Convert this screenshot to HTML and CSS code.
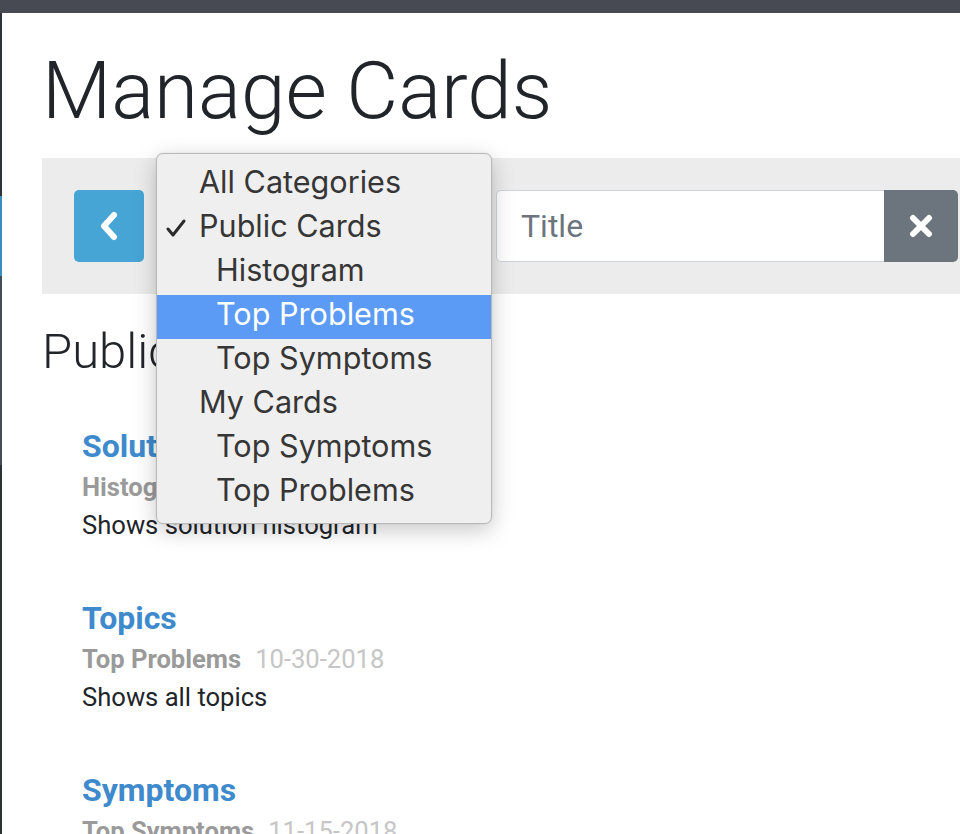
FILE: index.html
```html
<!DOCTYPE html>
<html lang="en">
<head>
<meta charset="utf-8">
<title>Manage Cards</title>
<link rel="stylesheet" href="styles.css">
</head>
<body>
<div class="topbar"></div>
<div class="shell">
  <aside class="rail">
    <span class="seg seg-dark"></span>
    <span class="seg seg-blue"></span>
    <span class="seg seg-slate"></span>
    <span class="seg seg-rest"></span>
  </aside>
  <main class="main">
    <h1 class="page-title">Manage Cards</h1>
    <div class="filters">
      <button class="back" type="button" aria-label="Back">
        <svg width="22" height="30" viewBox="0 0 22 30"><polyline points="16,4 6,15 16,26" fill="none" stroke="#fff" stroke-width="6" stroke-linecap="round" stroke-linejoin="round"/></svg>
      </button>
      <div class="select-wrap">
        <div class="select">Public Cards</div>
        <ul class="popup">
          <li class="opt">All Categories</li>
          <li class="opt checked"><svg class="check" width="22" height="22" viewBox="0 0 22 22"><polyline points="3,12 8,18 19,4" fill="none" stroke="#2b2b2b" stroke-width="3" stroke-linecap="round" stroke-linejoin="round"/></svg>Public Cards</li>
          <li class="opt sub">Histogram</li>
          <li class="opt sub active">Top Problems</li>
          <li class="opt sub">Top Symptoms</li>
          <li class="opt">My Cards</li>
          <li class="opt sub">Top Symptoms</li>
          <li class="opt sub">Top Problems</li>
        </ul>
      </div>
      <div class="search">
        <input class="search-input" type="text" placeholder="Title">
        <button class="clear" type="button" aria-label="Clear">
          <svg width="24" height="24" viewBox="0 0 24 24"><path d="M4 4 L20 20 M20 4 L4 20" fill="none" stroke="#fff" stroke-width="6" stroke-linecap="round"/></svg>
        </button>
      </div>
    </div>
    <h2 class="section-title">Public Cards</h2>
    <ul class="cards">
      <li class="card">
        <h3 class="card-title">Solution Histogram</h3>
        <p class="card-meta"><b>Histogram</b><span class="date">10-30-2018</span></p>
        <p class="card-desc">Shows solution histogram</p>
      </li>
      <li class="card">
        <h3 class="card-title">Topics</h3>
        <p class="card-meta"><b>Top Problems</b><span class="date">10-30-2018</span></p>
        <p class="card-desc">Shows all topics</p>
      </li>
      <li class="card">
        <h3 class="card-title">Symptoms</h3>
        <p class="card-meta"><b>Top Symptoms</b><span class="date">11-15-2018</span></p>
        <p class="card-desc">Shows all symptoms</p>
      </li>
    </ul>
  </main>
</div>
</body>
</html>
```

FILE: styles.css
```css
* { box-sizing: border-box; }
html, body {
  margin: 0;
  padding: 0;
  height: 100%;
  overflow: hidden;
  background: #fff;
  font-family: Roboto, "Liberation Sans", sans-serif;
  color: #212529;
}
.topbar {
  height: 13px;
  background: #474a53;
}
.shell {
  display: flex;
  height: calc(100% - 13px);
}
.rail {
  width: 2px;
  flex: none;
  display: flex;
  flex-direction: column;
}
.seg { display: block; }
.seg-dark { height: 183px; background: #2f3237; }
.seg-blue { height: 80px; background: #3b8ec0; }
.seg-slate { height: 189px; background: #464c57; }
.seg-rest { flex: 1; background: #2e3136; }

.main {
  flex: 1;
  padding-left: 40px;
  min-width: 0;
}
.page-title {
  margin: 30px 0 19px;
  font-size: 80px;
  font-weight: 300;
  line-height: 96px;
  letter-spacing: 0;
}
.filters {
  display: flex;
  align-items: stretch;
  gap: 16px;
  background: #ececec;
  padding: 32px 2px 32px 32px;
  height: 136px;
}
.back {
  flex: none;
  width: 70px;
  height: 72px;
  border: 0;
  border-radius: 5px;
  background: #46a5d5;
  display: flex;
  align-items: center;
  justify-content: center;
  padding: 0;
}
.select-wrap {
  position: relative;
  width: 320px;
  flex: none;
}
.select {
  height: 72px;
  border-radius: 5px;
  background: #fff;
  border: 1px solid #ced4da;
  font-size: 30px;
  padding: 14px 20px;
}
.popup {
  position: absolute;
  left: -4px;
  top: -37px;
  width: 336px;
  margin: 0;
  padding: 9px 0 8px;
  list-style: none;
  background: #efefef;
  border: 1px solid #b9b9b9;
  border-radius: 7px;
  box-shadow: 0 6px 22px rgba(0, 0, 0, 0.22), 0 0 2px rgba(0, 0, 0, 0.1);
  font-family: Inter, "Liberation Sans", sans-serif;
  font-size: 30.6px;
  color: #363636;
  z-index: 5;
}
.opt {
  position: relative;
  height: 44px;
  line-height: 38px;
  padding-left: 42px;
  white-space: nowrap;
}
.opt.sub { padding-left: 59px; }
.opt.active {
  background: #5c9bf5;
  color: #fff;
}
.check {
  position: absolute;
  left: 8px;
  top: 10px;
}
.search {
  flex: 1;
  min-width: 0;
  display: flex;
}
.search-input {
  flex: 1;
  width: 0;
  min-width: 0;
  height: 72px;
  border: 1px solid #ced4da;
  border-right: 0;
  border-radius: 5px 0 0 5px;
  padding: 0 24px;
  font-family: Roboto, "Liberation Sans", sans-serif;
  font-size: 32px;
  color: #495057;
  background: #fff;
  outline: none;
}
.search-input::placeholder { color: #6c757d; }
.clear {
  width: 74px;
  flex: none;
  height: 72px;
  border: 0;
  border-radius: 0 5px 5px 0;
  background: #6c757d;
  display: flex;
  align-items: center;
  justify-content: center;
  padding: 0;
}
.section-title {
  margin: 29px 0 45px;
  font-size: 49px;
  font-weight: 300;
  line-height: 1.2;
}
.cards {
  list-style: none;
  margin: 0;
  padding: 0 0 0 40px;
}
.card { margin-bottom: 55px; }
.card-title {
  margin: 0 0 3px;
  font-size: 32px;
  font-weight: 700;
  line-height: 38px;
  color: #3e8acc;
}
.card-meta {
  margin: 0;
  font-size: 25.6px;
  line-height: 38px;
  color: #9a9a9a;
}
.card-meta b { font-weight: 700; }
.date {
  margin-left: 14px;
  color: #c6c6c6;
}
.card-desc {
  margin: 0;
  font-size: 25.6px;
  line-height: 38px;
  color: #212529;
}
```
